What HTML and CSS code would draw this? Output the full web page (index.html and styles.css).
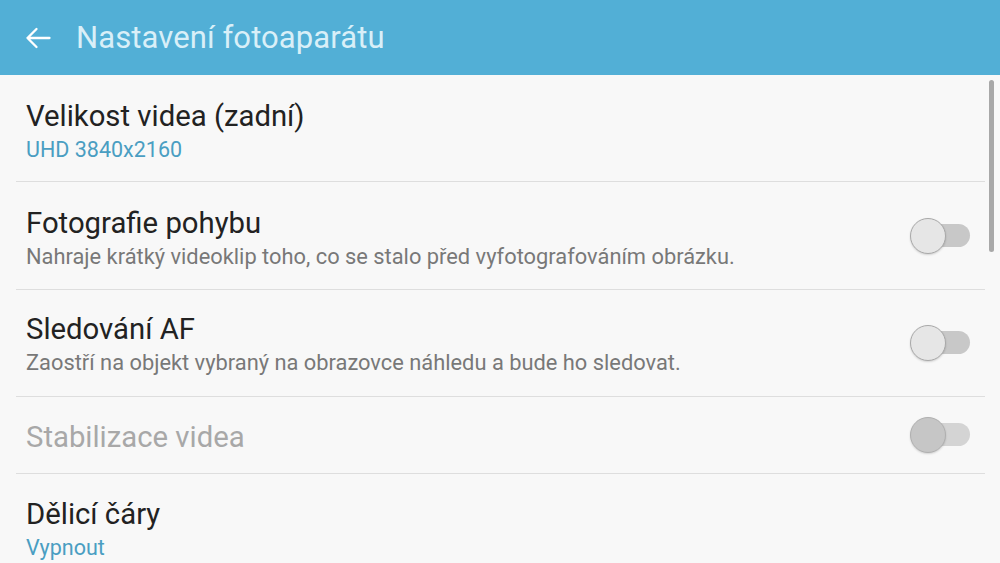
FILE: index.html
```html
<!DOCTYPE html>
<html lang="cs">
<head>
<meta charset="utf-8">
<link rel="stylesheet" href="styles.css">
</head>
<body>
<div class="screen">
  <header class="appbar">
    <svg class="back" width="26" height="22" viewBox="0 0 26 22"><path d="M24.5 11H2.5M11.5 2L2.5 11L11.5 20" fill="none" stroke="#ffffff" stroke-width="2.3" stroke-linecap="round" stroke-linejoin="round"/></svg>
    <h1 class="title">Nastavení fotoaparátu</h1>
  </header>
  <main class="list">
    <div class="item r1">
      <div class="text">
        <div class="label">Velikost videa (zadní)</div>
        <div class="value">UHD 3840x2160</div>
      </div>
    </div>
    <div class="item r2">
      <div class="text">
        <div class="label">Fotografie pohybu</div>
        <div class="desc">Nahraje krátký videoklip toho, co se stalo před vyfotografováním obrázku.</div>
      </div>
      <div class="switch"><span class="track"></span><span class="thumb"></span></div>
    </div>
    <div class="item r3">
      <div class="text">
        <div class="label">Sledování AF</div>
        <div class="desc">Zaostří na objekt vybraný na obrazovce náhledu a bude ho sledovat.</div>
      </div>
      <div class="switch"><span class="track"></span><span class="thumb"></span></div>
    </div>
    <div class="item r4 disabled">
      <div class="text">
        <div class="label">Stabilizace videa</div>
      </div>
      <div class="switch"><span class="track"></span><span class="thumb"></span></div>
    </div>
    <div class="item r5">
      <div class="text">
        <div class="label">Dělicí čáry</div>
        <div class="value">Vypnout</div>
      </div>
    </div>
    <div class="scrollbar"></div>
  </main>
</div>
</body>
</html>
```
FILE: styles.css
```css
* { box-sizing: border-box; margin: 0; padding: 0; }
html, body { width: 1000px; height: 563px; overflow: hidden; }
body { font-family: Roboto, "Noto Sans", sans-serif; background: #f8f8f8; }
.screen { width: 1000px; height: 563px; display: flex; flex-direction: column; }
.appbar {
  height: 75px; flex: none; background: #52afd6;
  display: flex; align-items: center; padding-left: 25px;
}
.back { margin-right: 25px; }
.title { font-weight: 400; font-size: 31px; color: #d9eff8; letter-spacing: 0.1px; }
.list { position: relative; flex: 1; padding: 0 15px 0 16px; }
.item {
  display: flex; align-items: center; border-bottom: 1px solid #dedede;
  padding-left: 10px;
}
.r1 { height: 107px; }
.r1 .text { margin-top: 10px; }
.r2 { height: 108px; }
.r2 .text { margin-top: 9px; }
.r3 { height: 107px; }
.r3 .text { margin-top: 5px; }
.r4 { height: 77px; }
.r4 .text { margin-top: 3px; }
.r5 { height: 100px; border-bottom: none; }
.r5 .text { margin-top: 14px; }
.text { flex: 1; display: flex; flex-direction: column; }
.label { font-size: 29.3px; color: #222222; line-height: 34px; }
.value { font-size: 21.5px; color: #4a9ec2; line-height: 34px; }
.desc { font-size: 21.85px; color: #787878; line-height: 34px; }
.disabled .label { color: #a8a8a8; }
.switch { position: relative; width: 60px; height: 36px; margin-right: 15px; flex: none; }
.track {
  position: absolute; left: 6px; right: 0; top: 6px; height: 23px;
  background: #c8c8c8; border-radius: 12px;
}
.thumb {
  position: absolute; left: 0; top: 0; width: 36px; height: 36px;
  border-radius: 50%; background: #e6e6e6; border: 1.5px solid #a9a9a9;
  box-shadow: 0 1px 2px rgba(0,0,0,0.15);
}
.disabled .thumb { background: #c6c6c6; border-color: #b0b0b0; }
.disabled .track { background: #d4d4d4; }
.scrollbar {
  position: absolute; right: 6px; top: 5px; width: 5px; height: 172px;
  background: #a8a8a8; border-radius: 3px;
}
```
